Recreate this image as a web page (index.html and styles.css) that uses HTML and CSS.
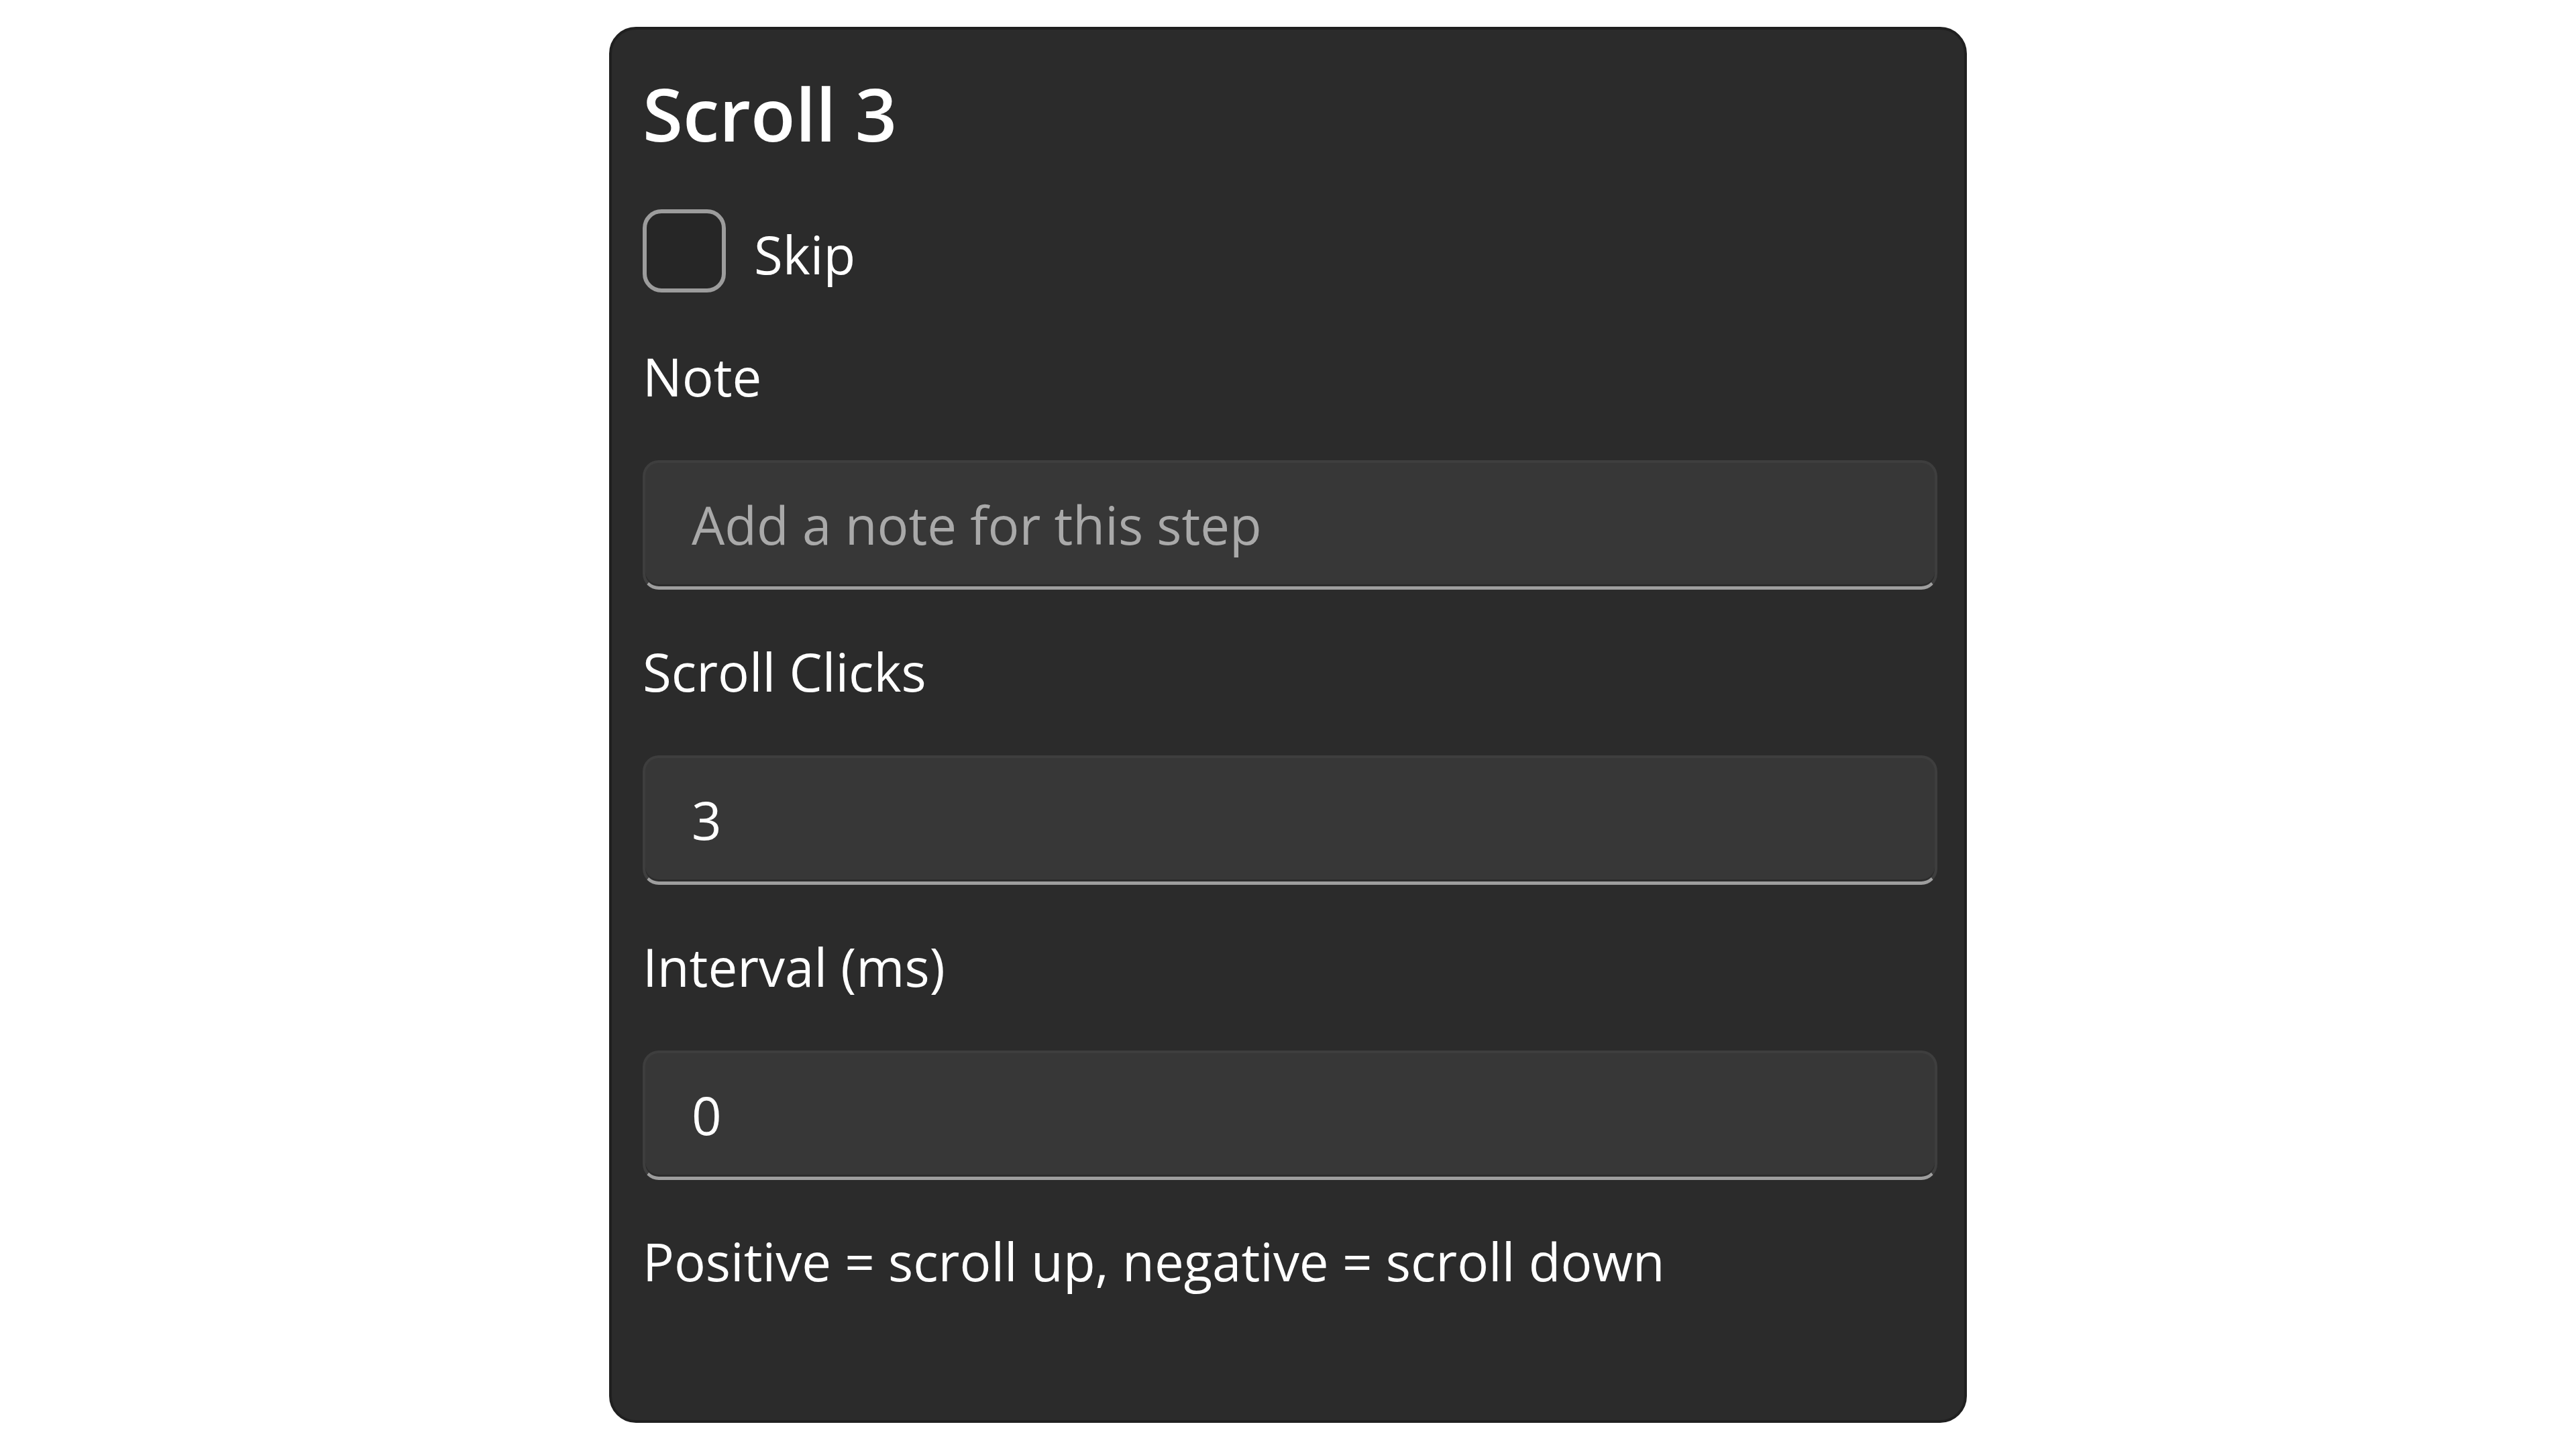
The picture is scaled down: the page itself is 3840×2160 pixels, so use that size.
FILE: index.html
```html
<!DOCTYPE html>
<html lang="en">
<head>
    <meta charset="UTF-8">
    <meta name="viewport" content="width=device-width, initial-scale=1.0">
    <title>Scroll 3</title>
    <link rel="stylesheet" href="styles.css">
</head>
<body>
    <section class="step-card">
        <h1 class="step-title">Scroll 3</h1>

        <label class="check-row">
            <span class="check-box"></span>
            <span class="check-label">Skip</span>
        </label>

        <div class="field">
            <span class="field-label">Note</span>
            <div class="text-box placeholder">Add a note for this step</div>
        </div>

        <div class="field">
            <span class="field-label">Scroll Clicks</span>
            <div class="text-box">3</div>
        </div>

        <div class="field">
            <span class="field-label">Interval (ms)</span>
            <div class="text-box">0</div>
        </div>

        <p class="hint">Positive = scroll up, negative = scroll down</p>
    </section>
</body>
</html>
```

FILE: styles.css
```css
* {
    margin: 0;
    padding: 0;
    box-sizing: border-box;
    font-family: "Open Sans", "Noto Sans", sans-serif;
}

body {
    background: #ffffff;
    padding-top: 40px;
}

.step-card {
    width: 2024px;
    height: 2081px;
    margin: 0 auto;
    background: #2b2b2b;
    border: 4px solid #202020;
    border-radius: 40px;
    padding: 50px 40px 0 46px;
    display: flex;
    flex-direction: column;
    color: #ffffff;
}

.step-title {
    font-size: 109px;
    font-weight: 600;
    line-height: 150px;
    margin-bottom: 68px;
}

.check-row {
    display: flex;
    align-items: center;
    gap: 42px;
    margin-bottom: 71px;
}

.check-box {
    width: 124px;
    height: 124px;
    border: 6px solid #9c9c9c;
    border-radius: 28px;
    background: #262626;
}

.check-label {
    font-size: 78px;
    line-height: 108px;
    padding-top: 10px;
}

.field {
    display: flex;
    flex-direction: column;
    margin-bottom: 68px;
}

.field-label {
    font-size: 78px;
    line-height: 108px;
    margin-bottom: 71px;
}

.text-box {
    height: 193px;
    width: 1930px;
    background: #373737;
    border: 4px solid #3e3e3e;
    border-bottom: 5px solid #9e9e9e;
    border-radius: 24px;
    box-shadow: inset 0 -3px 0 #2c2c2c;
    padding-left: 69px;
    display: flex;
    align-items: center;
    font-size: 78px;
    color: #ffffff;
}

.text-box.placeholder {
    color: #a9a9a9;
}

.hint {
    font-size: 78px;
    line-height: 108px;
    margin-top: -1px;
}
```
